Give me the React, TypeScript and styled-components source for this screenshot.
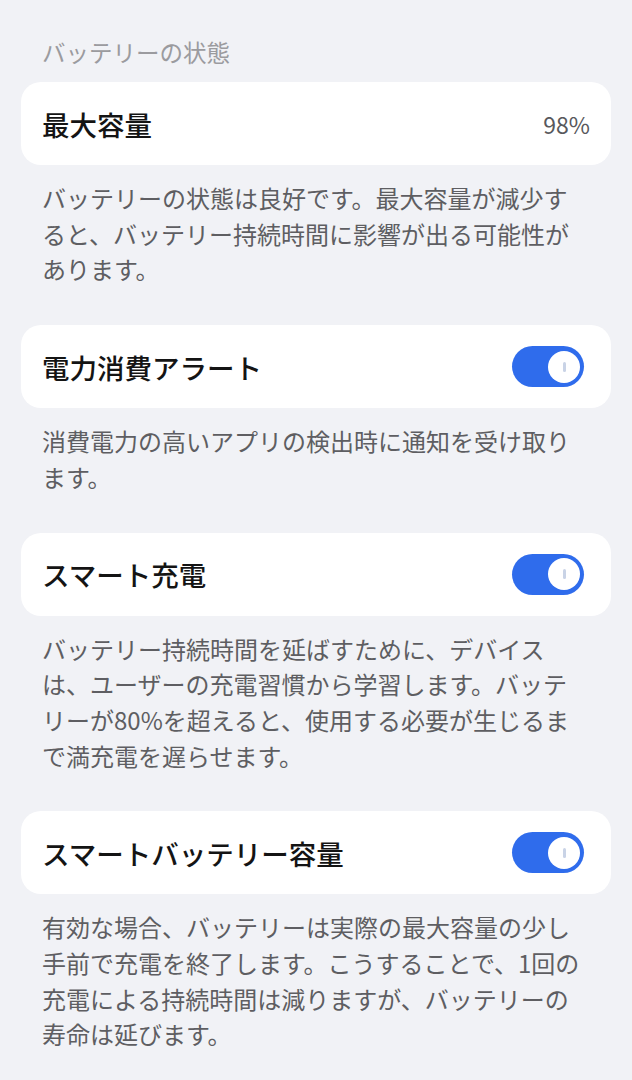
import { useState } from "react";
import styled, { createGlobalStyle } from "styled-components";

const GlobalStyle = createGlobalStyle`
  html, body {
    margin: 0;
    padding: 0;
    background: #f1f2f6;
  }
  body {
    font-family: "Noto Sans CJK JP", "Noto Sans", sans-serif;
    -webkit-font-smoothing: antialiased;
  }
`;

const Page = styled.div`
  width: 632px;
  min-height: 1080px;
  box-sizing: border-box;
  padding: 36px 21px 0;
  background: #f1f2f6;
`;

const SectionHeader = styled.div`
  padding: 0 21px;
  font-size: 23.5px;
  line-height: 32px;
  color: #9b9b9f;
  margin-bottom: 14px;
`;

const Card = styled.div`
  height: 83px;
  box-sizing: border-box;
  padding: 0 26px 0 21px;
  background: #ffffff;
  border-radius: 20px;
  display: flex;
  align-items: center;
  justify-content: space-between;
`;

const Title = styled.div`
  font-size: 27.5px;
  font-weight: 500;
  color: #141414;
  line-height: 36px;
`;

const Value = styled.div`
  font-size: 23px;
  color: #58585c;
  margin-right: -5px;
`;

const Description = styled.p`
  margin: 15px 0 38px;
  padding: 0 21px;
  width: 548px;
  box-sizing: content-box;
  font-size: 24px;
  line-height: 35.7px;
  color: #5e5e62;
`;

const SwitchTrack = styled.button<{ $on: boolean }>`
  width: 72px;
  height: 41px;
  padding: 0 4px;
  border: none;
  border-radius: 21px;
  background: ${(p) => (p.$on ? "#2f6cec" : "#c8cad0")};
  display: flex;
  align-items: center;
  justify-content: ${(p) => (p.$on ? "flex-end" : "flex-start")};
  cursor: pointer;
  margin-right: 1px;
`;

const Knob = styled.span`
  width: 32px;
  height: 32px;
  border-radius: 50%;
  background: #ffffff;
  display: flex;
  align-items: center;
  justify-content: center;
`;

const KnobMark = styled.span`
  width: 3px;
  height: 10px;
  border-radius: 2px;
  background: #c9d3e6;
`;

function Toggle() {
  const [on, setOn] = useState(true);
  return (
    <SwitchTrack $on={on} onClick={() => setOn(!on)}>
      <Knob>
        <KnobMark />
      </Knob>
    </SwitchTrack>
  );
}

const items = [
  {
    title: "電力消費アラート",
    desc: "消費電力の高いアプリの検出時に通知を受け取ります。",
  },
  {
    title: "スマート充電",
    desc: "バッテリー持続時間を延ばすために、デバイスは、ユーザーの充電習慣から学習します。バッテリーが80%を超えると、使用する必要が生じるまで満充電を遅らせます。",
  },
  {
    title: "スマートバッテリー容量",
    desc: "有効な場合、バッテリーは実際の最大容量の少し手前で充電を終了します。こうすることで、1回の充電による持続時間は減りますが、バッテリーの寿命は延びます。",
  },
];

export default function App() {
  return (
    <Page>
      <GlobalStyle />
      <SectionHeader>バッテリーの状態</SectionHeader>
      <Card>
        <Title>最大容量</Title>
        <Value>98%</Value>
      </Card>
      <Description>
        バッテリーの状態は良好です。最大容量が減少すると、バッテリー持続時間に影響が出る可能性があります。
      </Description>
      {items.map((item) => (
        <div key={item.title}>
          <Card>
            <Title>{item.title}</Title>
            <Toggle />
          </Card>
          <Description>{item.desc}</Description>
        </div>
      ))}
    </Page>
  );
}
